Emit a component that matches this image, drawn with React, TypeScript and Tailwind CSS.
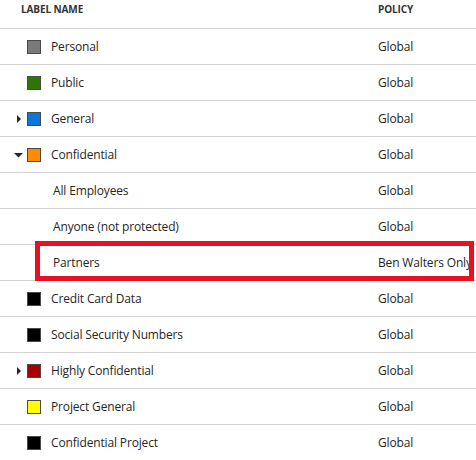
import React from "react";

type Row = {
  name: string;
  policy: string;
  color?: string;
  arrow?: "right" | "down";
  sub?: boolean;
  highlight?: boolean;
};

const rows: Row[] = [
  { name: "Personal", policy: "Global", color: "#7a7a7a" },
  { name: "Public", policy: "Global", color: "#2d7600" },
  { name: "General", policy: "Global", color: "#0a78d7", arrow: "right" },
  { name: "Confidential", policy: "Global", color: "#ff8c00", arrow: "down" },
  { name: "All Employees", policy: "Global", sub: true },
  { name: "Anyone (not protected)", policy: "Global", sub: true },
  { name: "Partners", policy: "Ben Walters Only", sub: true, highlight: true },
  { name: "Credit Card Data", policy: "Global", color: "#000000" },
  { name: "Social Security Numbers", policy: "Global", color: "#000000" },
  { name: "Highly Confidential", policy: "Global", color: "#a80000", arrow: "right" },
  { name: "Project General", policy: "Global", color: "#ffff00" },
  { name: "Confidential Project", policy: "Global", color: "#000000" },
];

function Arrow({ dir }: { dir?: "right" | "down" }) {
  return (
    <svg width="10" height="10" viewBox="0 0 10 10" className="shrink-0">
      {dir === "right" && <polygon points="3,1 7,5 3,9" fill="#262626" />}
      {dir === "down" && <polygon points="0,3 9,3 4.5,7.5" fill="#262626" />}
    </svg>
  );
}

export default function App() {
  return (
    <div
      className="w-[476px] h-[460px] overflow-hidden bg-white text-[#262626]"
      style={{ fontFamily: '"Open Sans", "Noto Sans", sans-serif' }}
    >
      <div className="grid grid-cols-[378px_1fr] h-[29px] items-start pt-[2px] border-b border-[#d2d2d2] text-[10px] font-bold text-[#333] tracking-[-0.1px]">
        <div className="pl-[21px]">LABEL NAME</div>
        <div>POLICY</div>
      </div>
      {rows.map((r) => (
        <div
          key={r.name}
          className="relative grid grid-cols-[378px_1fr] h-9 items-center border-b border-[#d2d2d2] text-[12px] tracking-[-0.15px]"
        >
          <div className="flex items-center whitespace-nowrap">
            {r.sub ? (
              <span className="pl-[53px]">{r.name}</span>
            ) : (
              <>
                <div className="w-[14px] ml-[14px] mr-[-1px] flex">
                  <Arrow dir={r.arrow} />
                </div>
                <span
                  className="w-[14px] h-[14px] border border-[#4a4a4a] shrink-0"
                  style={{ backgroundColor: r.color }}
                />
                <span className="ml-[10px]">{r.name}</span>
              </>
            )}
          </div>
          <div className="whitespace-nowrap overflow-hidden">{r.policy}</div>
          {r.highlight && (
            <div className="absolute left-[35px] top-[-4px] w-[439px] h-[40px] border-[5px] border-[#e81123] pointer-events-none" />
          )}
        </div>
      ))}
    </div>
  );
}
